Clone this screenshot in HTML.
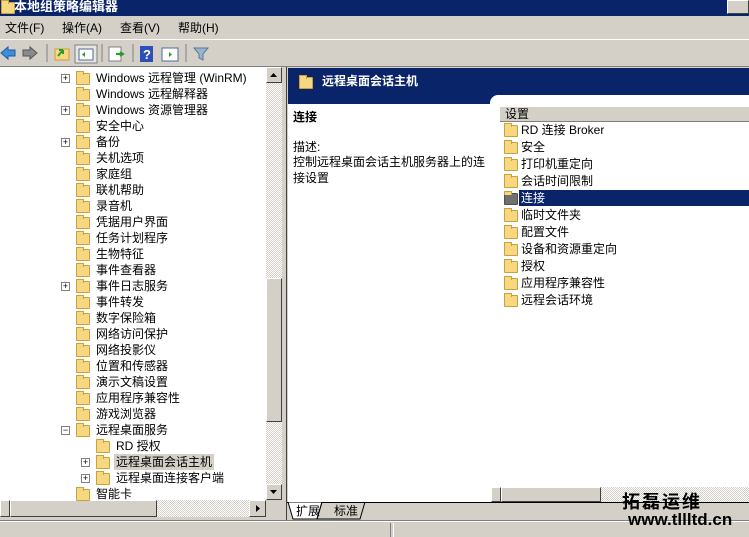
<!DOCTYPE html><html><head><meta charset="utf-8"><style>
*{margin:0;padding:0;box-sizing:border-box}
body{width:749px;height:537px;overflow:hidden;background:#d4d0c8;font:12px "Liberation Sans","Noto Sans CJK SC","WenQuanYi Zen Hei",sans-serif;position:relative;color:#000}
.a{position:absolute}
.f{position:absolute;width:14px;height:12px;background:#f7d77f;border:1px solid #c9a13d;border-radius:1px}
.f:before{content:"";position:absolute;left:-1px;top:-3px;width:6px;height:3px;background:#f7d77f;border:1px solid #c9a13d;border-bottom:none}
.p{position:absolute;width:9px;height:9px;border:1px solid #808080;background:#fff;font-size:9px;line-height:7px;text-align:center;color:#000}
.t{position:absolute;white-space:nowrap;line-height:16px}
.sb{background:repeating-conic-gradient(#fff 0 25%,#d4d0c8 0 50%) 0 0/2px 2px}
.btn{position:absolute;background:#d4d0c8;border:1px solid;border-color:#fff #404040 #404040 #fff}
</style></head><body>
<div class="a" style="left:0;top:0;width:749px;height:16px;background:#0a246a"></div>
<div class="f" style="left:1px;top:2px"></div>
<div class="t" style="left:14px;top:-1px;color:#fff;font-weight:bold;font-size:13px">本地组策略编辑器</div>
<div class="a" style="left:727px;top:0;width:22px;height:14px;background:#d4d0c8;border:1px solid;border-color:#fff #404040 #404040 #fff"></div>
<div class="t" style="left:5px;top:20px">文件(F)</div>
<div class="t" style="left:62px;top:20px">操作(A)</div>
<div class="t" style="left:120px;top:20px">查看(V)</div>
<div class="t" style="left:178px;top:20px">帮助(H)</div>
<div class="a" style="left:0;top:39px;width:749px;height:1px;background:#fff"></div>
<svg class="a" style="left:0;top:42px" width="220" height="22">
<path d="M1 11l7-6v3h7v6h-7v3z" fill="#3c8fd8" stroke="#1d5aa6"/>
<path d="M37 11l-7-6v3h-7v6h7v3z" fill="#8a8a8a" stroke="#555"/>
<line x1="47" y1="2" x2="47" y2="20" stroke="#808080"/>
<rect x="55" y="7" width="14" height="11" fill="#f7d77f" stroke="#c9a13d"/><path d="M58 14l5-6m0 0v4m0-4h-4" stroke="#2a9a2a" stroke-width="2" fill="none"/>
<rect x="75" y="3" width="22" height="18" fill="#e8e6e0" stroke="#808080"/><rect x="79" y="7" width="14" height="11" fill="#fff" stroke="#4a6a9a"/><path d="M85 10l-3 2.5 3 2.5z" fill="#2a9a2a"/>
<line x1="102" y1="2" x2="102" y2="20" stroke="#808080"/>
<rect x="109" y="5" width="12" height="14" fill="#fff" stroke="#808080"/><path d="M116 12h6m-2-2l3 2-3 2" stroke="#2a9a2a" stroke-width="2" fill="none"/>
<line x1="133" y1="2" x2="133" y2="20" stroke="#808080"/>
<rect x="140" y="4" width="13" height="16" fill="#2c4fb8"/><text x="143" y="17" fill="#fff" font-size="13" font-weight="bold" font-family="Liberation Sans">?</text>
<rect x="162" y="6" width="16" height="13" fill="#fff" stroke="#4a6a9a"/><path d="M169 10l3 2.5-3 2.5z" fill="#2a9a2a"/>
<line x1="186" y1="2" x2="186" y2="20" stroke="#808080"/>
<path d="M194 6h14l-5 6v6l-4 -2v-4z" fill="#9ab4cc" stroke="#5a7a98"/>
</svg>
<div class="a" style="left:0;top:66px;width:749px;height:1px;background:#808080"></div>
<!-- left pane -->
<div class="a" style="left:0;top:67px;width:266px;height:433px;background:#fff"></div>
<div class="a sb" style="left:266px;top:67px;width:16px;height:433px"></div>
<div class="btn" style="left:266px;top:67px;width:16px;height:16px"><svg width="14" height="14"><path d="M3 9h7l-3.5-4z"/></svg></div>
<div class="btn" style="left:266px;top:278px;width:16px;height:144px"></div>
<div class="btn" style="left:266px;top:484px;width:16px;height:16px"><svg width="14" height="14"><path d="M3 5h7l-3.5 4z"/></svg></div>
<div class="a" style="left:282px;top:67px;width:5px;height:454px;background:#d4d0c8;border-right:1px solid #404040"></div>
<div class="a sb" style="left:0;top:500px;width:266px;height:17px"></div>
<div class="btn" style="left:0;top:500px;width:10px;height:17px"></div>
<div class="btn" style="left:10px;top:500px;width:147px;height:17px"></div>
<div class="btn" style="left:249px;top:500px;width:17px;height:17px"><svg width="15" height="15"><path d="M6 4v7l4-3.5z"/></svg></div>
<div id="tree"></div>
<!-- right pane -->
<div class="a" style="left:288px;top:68px;width:461px;height:434px;background:#fff"></div>
<div class="a" style="left:288px;top:68px;width:461px;height:36px;background:#0a246a"></div>
<div class="a" style="left:490px;top:95px;width:259px;height:20px;background:#fff;border-top-left-radius:8px"></div>
<div class="f" style="left:299px;top:77px"></div>
<div class="t" style="left:322px;top:73px;color:#fff;font-weight:bold">远程桌面会话主机</div>
<div class="t" style="left:293px;top:109px;font-weight:bold">连接</div>
<div class="t" style="left:293px;top:139px">描述:</div>
<div class="t" style="left:293px;top:154px;width:196px;white-space:normal">控制远程桌面会话主机服务器上的连接设置</div>
<div class="a" style="left:500px;top:107px;width:249px;height:15px;background:#d4d0c8;border-bottom:1px solid #808080"></div>
<div class="t" style="left:505px;top:106px">设置</div>
<div class="a" style="left:519px;top:190px;width:230px;height:16px;background:#0a246a"></div>
<div id="list"></div>
<div class="a sb" style="left:491px;top:487px;width:258px;height:15px"></div>
<div class="btn" style="left:491px;top:487px;width:10px;height:15px"></div>
<div class="btn" style="left:501px;top:487px;width:100px;height:15px"></div>
<div class="a" style="left:287px;top:502px;width:462px;height:1px;background:#000"></div>
<svg class="a" style="left:286px;top:502px" width="90" height="19"><path d="M2 0l5 17h24l5-17z" fill="#fff" stroke="#000"/><path d="M36 0l-5 17h43l5-17" fill="none" stroke="#000"/></svg>
<div class="t" style="left:296px;top:503px">扩展</div>
<div class="t" style="left:334px;top:503px">标准</div>
<div class="a" style="left:0;top:520px;width:749px;height:1px;background:#808080"></div>
<div class="a" style="left:0;top:521px;width:749px;height:1px;background:#fff"></div>
<div class="a" style="left:390px;top:523px;width:1px;height:14px;background:#808080"></div>
<div class="a" style="left:393px;top:523px;width:1px;height:14px;background:#fff"></div>
<div class="t" style="left:622px;top:494px;font-size:18px;font-weight:bold;letter-spacing:2px">拓磊运维</div>
<div class="t" style="left:628px;top:512px;font-size:17px;font-weight:bold">www.tllltd.cn</div>
<script>
var T=[[1,76,"Windows 远程管理 (WinRM)"],[0,76,"Windows 远程解释器"],[1,76,"Windows 资源管理器"],[0,76,"安全中心"],[1,76,"备份"],[0,76,"关机选项"],[0,76,"家庭组"],[0,76,"联机帮助"],[0,76,"录音机"],[0,76,"凭据用户界面"],[0,76,"任务计划程序"],[0,76,"生物特征"],[0,76,"事件查看器"],[1,76,"事件日志服务"],[0,76,"事件转发"],[0,76,"数字保险箱"],[0,76,"网络访问保护"],[0,76,"网络投影仪"],[0,76,"位置和传感器"],[0,76,"演示文稿设置"],[0,76,"应用程序兼容性"],[0,76,"游戏浏览器"],[2,76,"远程桌面服务"],[0,96,"RD 授权"],[1,96,"远程桌面会话主机"],[1,96,"远程桌面连接客户端"],[0,76,"智能卡"]];
var h="";T.forEach(function(r,i){var y=70+i*16;
if(r[0])h+='<div class="p" style="left:'+(r[1]-15)+'px;top:'+(y+4)+'px">'+(r[0]==1?'+':'−')+'</div>';
h+='<div class="f" style="left:'+r[1]+'px;top:'+(y+3)+'px"></div>';
if(i==24)h+='<div class="a" style="left:'+(r[1]+18)+'px;top:'+y+'px;width:100px;height:16px;background:#d4d0c8"></div>';
h+='<div class="t" style="left:'+(r[1]+20)+'px;top:'+y+'px">'+r[2]+'</div>';});
document.getElementById("tree").innerHTML=h;
var L=["RD 连接 Broker","安全","打印机重定向","会话时间限制","连接","临时文件夹","配置文件","设备和资源重定向","授权","应用程序兼容性","远程会话环境"];
h="";L.forEach(function(s,i){var y=122+i*17;
h+='<div class="f" style="left:504px;top:'+(y+3)+'px;'+(i==4?'background:#707070;border-color:#505050':'')+'"></div>';
h+='<div class="t" style="left:521px;top:'+y+'px;'+(i==4?'color:#fff':'')+'">'+s+'</div>';});
document.getElementById("list").innerHTML=h;
</script>
</body></html>
